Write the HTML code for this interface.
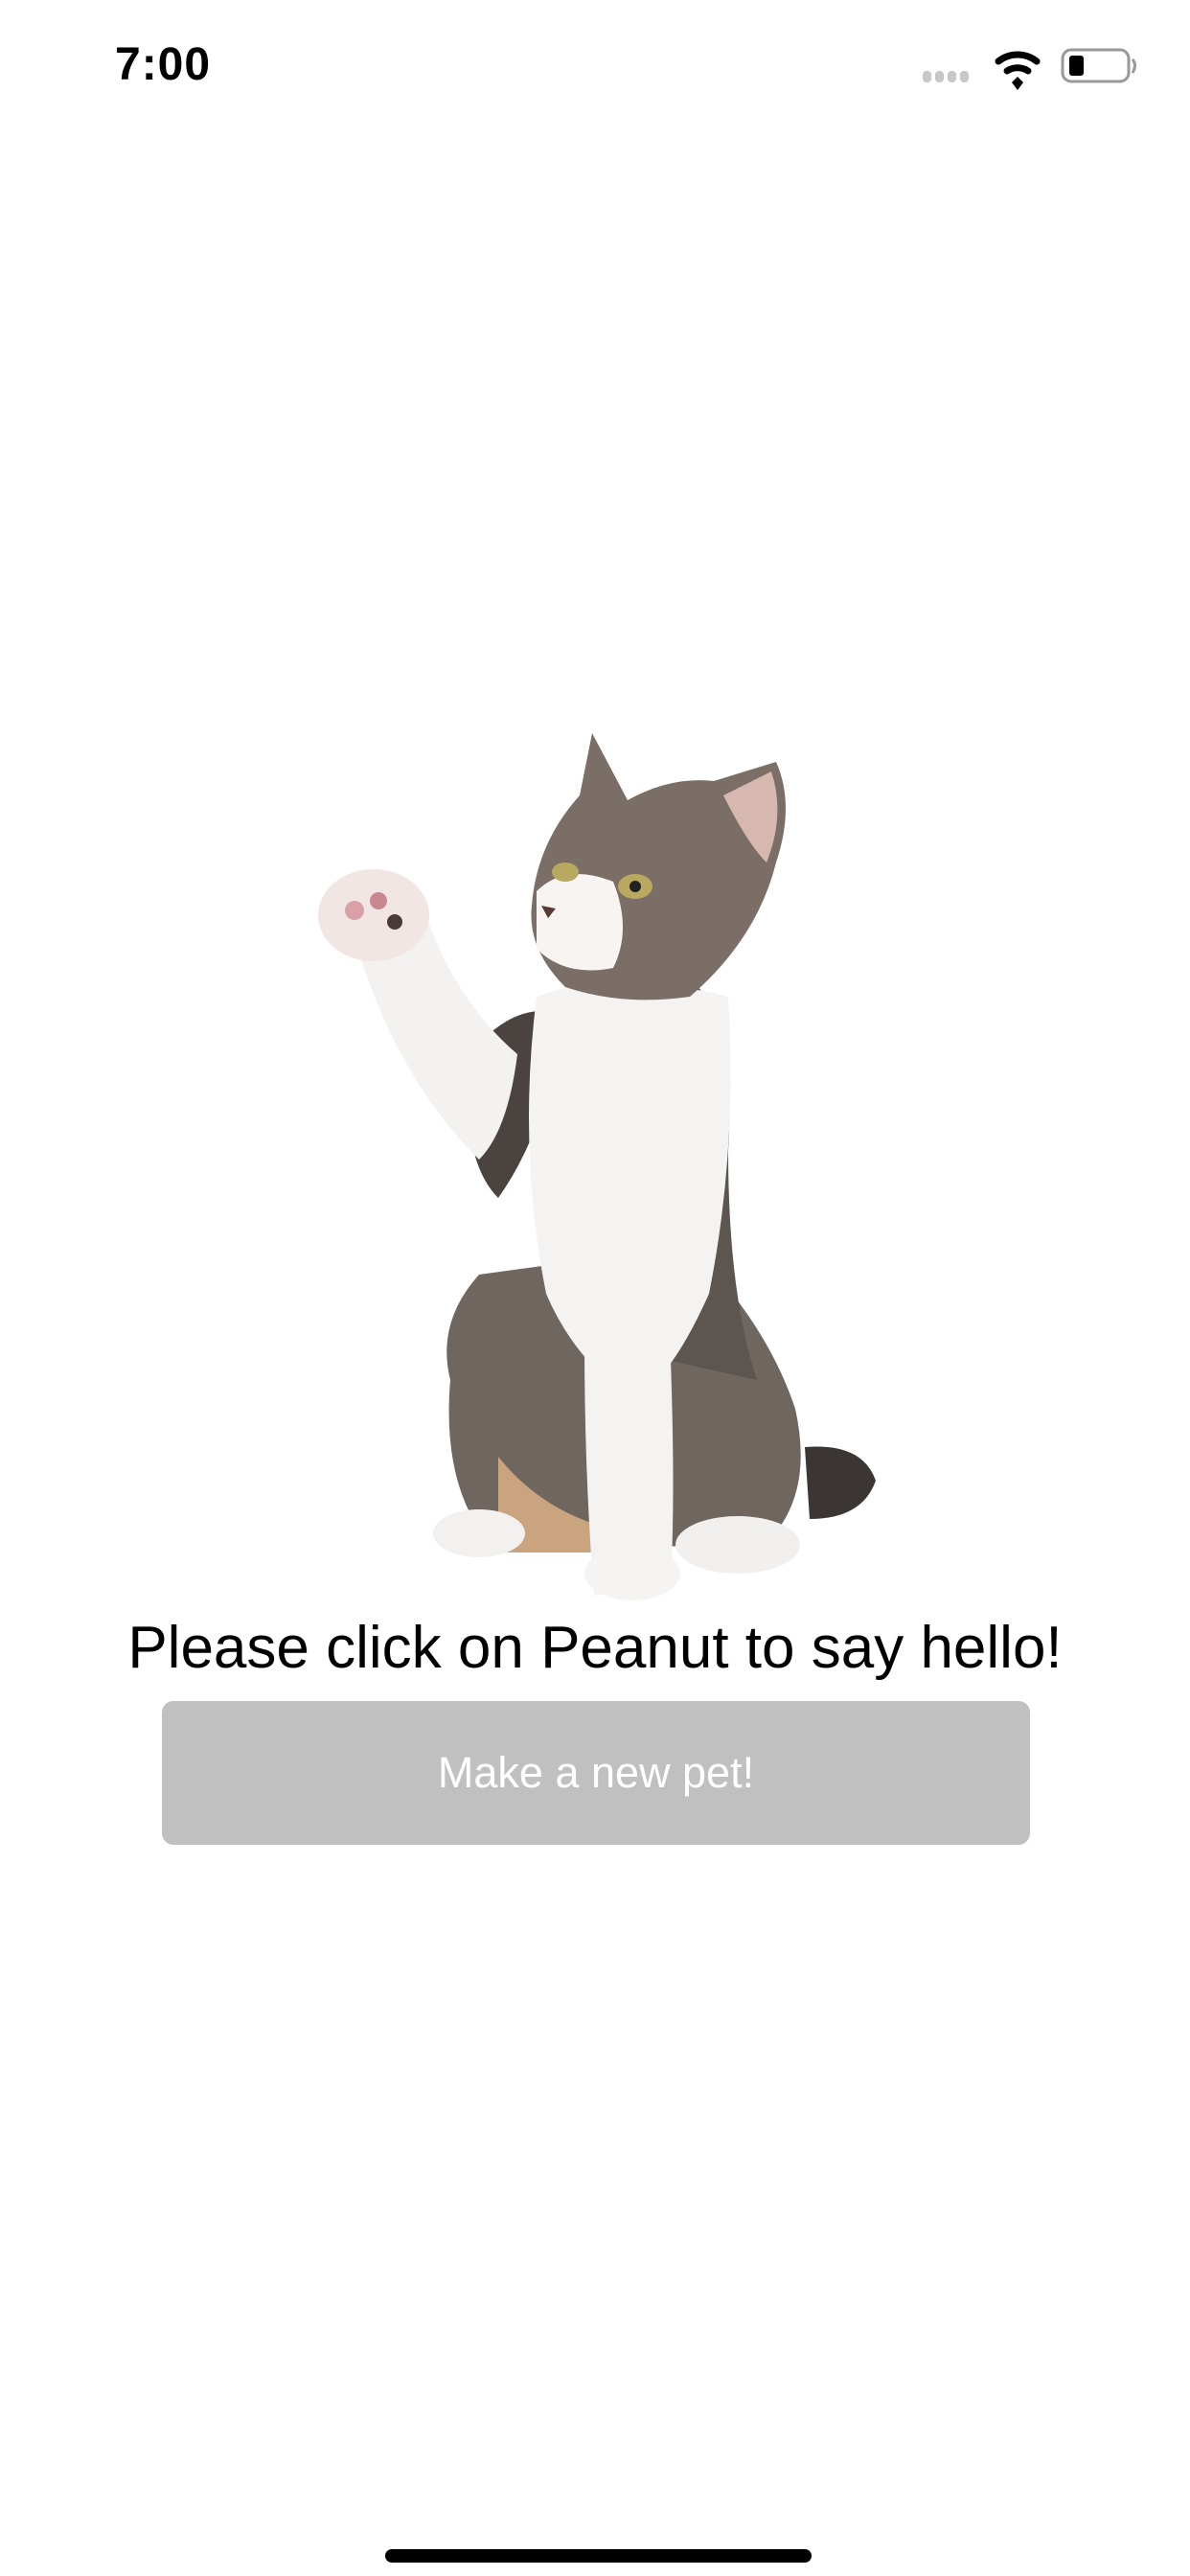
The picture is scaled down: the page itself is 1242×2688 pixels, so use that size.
<!DOCTYPE html>
<html><head><meta charset="utf-8"><style>
html,body{margin:0;padding:0;background:#fff;}
body{width:1242px;height:2688px;position:relative;overflow:hidden;font-family:"Liberation Sans",sans-serif;}
.time{position:absolute;left:120px;top:40px;font-size:48px;font-weight:600;color:#000;letter-spacing:1px;}
.msg{position:absolute;left:0;width:1242px;top:1684px;text-align:center;font-size:62px;color:#000;}
.btn{position:absolute;left:169px;top:1775px;width:906px;height:150px;background:#c0c0c0;border-radius:12px;color:#fff;font-size:45px;text-align:center;line-height:150px;}
.home{position:absolute;left:402px;top:2660px;width:445px;height:14px;background:#000;border-radius:7px;}
svg{position:absolute;left:0;top:0;}
</style></head><body>
<div class="time">7:00</div>
<svg width="1242" height="2688" viewBox="0 0 1242 2688">
  <g fill="#c8c8c8"><rect x="963" y="74" width="9" height="12" rx="4"/><rect x="976" y="74" width="9" height="12" rx="4"/><rect x="989" y="74" width="9" height="12" rx="4"/><rect x="1002" y="74" width="9" height="12" rx="4"/></g>
  <g fill="none" stroke="#000" stroke-width="7" stroke-linecap="round">
    <path d="M1042 64 A32 32 0 0 1 1082 64"/><path d="M1051 74 A20 20 0 0 1 1073 74"/>
  </g>
  <path d="M1062 80 L1068 86 L1062 94 L1056 86 Z" fill="#000"/>
  <rect x="1109" y="52" width="69" height="33" rx="9" fill="none" stroke="#999" stroke-width="3"/>
  <rect x="1116" y="58" width="15" height="21" rx="3" fill="#000"/>
  <path d="M1182 62 Q1187 68 1182 76" stroke="#999" stroke-width="3" fill="none"/>
  <g>
    <path d="M840 1510 Q900 1505 914 1545 Q900 1585 845 1585 Z" fill="#3b3633"/>
    <path d="M470 1440 Q455 1380 500 1330 L720 1300 Q800 1380 830 1470 Q850 1560 800 1610 L520 1620 Q460 1560 470 1440 Z" fill="#6f6660"/>
    <path d="M520 1520 Q560 1570 620 1590 L620 1620 L520 1620 Z" fill="#c9a47f"/>
    <path d="M700 1000 Q770 1050 760 1200 Q760 1350 790 1440 L700 1420 Z" fill="#5c5550"/>
    <path d="M490 1100 Q540 1040 590 1060 Q570 1180 520 1250 Q480 1210 490 1100 Z" fill="#4a4340"/>
    <path d="M560 1040 Q640 1010 760 1040 Q770 1200 740 1350 Q700 1440 660 1460 Q600 1420 570 1350 Q540 1200 560 1040 Z" fill="#f5f3f1"/>
    <path d="M350 940 Q400 900 440 940 Q470 1040 540 1100 Q530 1180 500 1210 Q420 1130 380 1010 Z" fill="#f4f2f0"/>
    <ellipse cx="390" cy="955" rx="58" ry="48" fill="#f1e6e4"/>
    <circle cx="370" cy="950" r="10" fill="#d9a0a8"/><circle cx="395" cy="940" r="9" fill="#c88890"/><circle cx="412" cy="962" r="8" fill="#4a3a3a"/>
    <path d="M610 1400 Q660 1390 700 1420 Q705 1560 700 1650 L620 1665 Q610 1540 610 1400 Z" fill="#f5f3f1"/>
    <ellipse cx="500" cy="1600" rx="48" ry="25" fill="#f3f1ef"/>
    <ellipse cx="660" cy="1642" rx="50" ry="28" fill="#f6f4f2"/>
    <ellipse cx="770" cy="1612" rx="65" ry="30" fill="#f2f0ee"/>
    <path d="M605 830 L618 765 L655 835 Q700 810 745 815 L810 795 Q830 840 810 900 Q790 980 720 1040 Q650 1050 590 1030 Q550 990 555 945 Q560 880 605 830 Z" fill="#7a6e66"/>
    <path d="M755 830 L805 805 Q820 850 800 900 Q780 880 755 830 Z" fill="#d7b8b0"/>
    <path d="M560 930 Q590 900 640 920 Q660 970 640 1010 Q590 1020 560 990 Z" fill="#f7f4f2"/>
    <ellipse cx="590" cy="910" rx="14" ry="10" fill="#b8a860"/>
    <ellipse cx="663" cy="925" rx="18" ry="13" fill="#b8a860"/>
    <circle cx="663" cy="925" r="6" fill="#222"/>
    <path d="M565 945 L580 948 L572 958 Z" fill="#5a3a35"/>
  </g>
</svg>
<div class="msg">Please click on Peanut to say hello!</div>
<div class="btn">Make a new pet!</div>
<div class="home"></div>
</body></html>
